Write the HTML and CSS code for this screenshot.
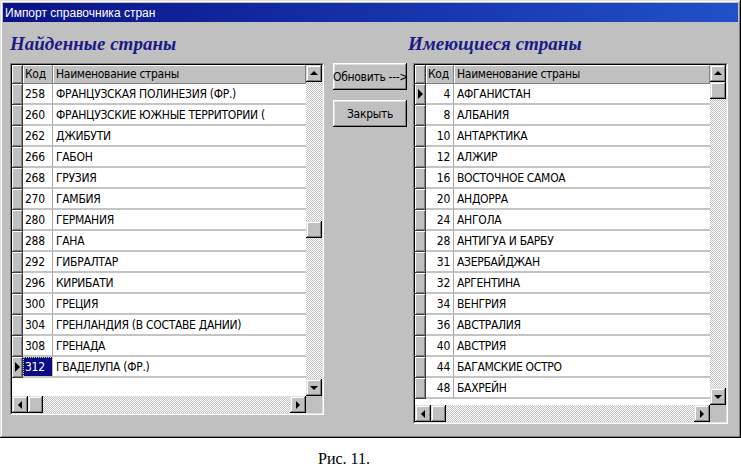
FILE: index.html
```html
<!DOCTYPE html>
<html lang="ru">
<head>
<meta charset="utf-8">
<title>Импорт справочника стран</title>
<link rel="stylesheet" href="styles.css">
</head>
<body>
<div class="window">
  <div class="titlebar">Импорт справочника стран</div>
  <div class="content">
    <h2 class="heading heading-left">Найденные страны</h2>
    <h2 class="heading heading-right">Имеющиеся страны</h2>

    <div class="dbgrid grid-left">
      <div class="grid-inner">
        <div class="grid-main">
          <div class="table">
            <div class="row head"><div class="ind"></div><div class="code">Код</div><div class="name">Наименование страны</div></div>
            <div class="row"><div class="ind"></div><div class="code">258</div><div class="name">ФРАНЦУЗСКАЯ ПОЛИНЕЗИЯ (ФР.)</div></div>
            <div class="row"><div class="ind"></div><div class="code">260</div><div class="name">ФРАНЦУЗСКИЕ ЮЖНЫЕ ТЕРРИТОРИИ (</div></div>
            <div class="row"><div class="ind"></div><div class="code">262</div><div class="name">ДЖИБУТИ</div></div>
            <div class="row"><div class="ind"></div><div class="code">266</div><div class="name">ГАБОН</div></div>
            <div class="row"><div class="ind"></div><div class="code">268</div><div class="name">ГРУЗИЯ</div></div>
            <div class="row"><div class="ind"></div><div class="code">270</div><div class="name">ГАМБИЯ</div></div>
            <div class="row"><div class="ind"></div><div class="code">280</div><div class="name">ГЕРМАНИЯ</div></div>
            <div class="row"><div class="ind"></div><div class="code">288</div><div class="name">ГАНА</div></div>
            <div class="row"><div class="ind"></div><div class="code">292</div><div class="name">ГИБРАЛТАР</div></div>
            <div class="row"><div class="ind"></div><div class="code">296</div><div class="name">КИРИБАТИ</div></div>
            <div class="row"><div class="ind"></div><div class="code">300</div><div class="name">ГРЕЦИЯ</div></div>
            <div class="row"><div class="ind"></div><div class="code">304</div><div class="name">ГРЕНЛАНДИЯ (В СОСТАВЕ ДАНИИ)</div></div>
            <div class="row"><div class="ind"></div><div class="code">308</div><div class="name">ГРЕНАДА</div></div>
            <div class="row current"><div class="ind"><span class="pointer"></span></div><div class="code selected">312</div><div class="name">ГВАДЕЛУПА (ФР.)</div></div>
          </div>
          <div class="vscroll">
            <div class="raised arrow up"></div>
            <div class="track"><div class="raised thumb thumb-left"></div></div>
            <div class="raised arrow down"></div>
          </div>
        </div>
        <div class="hscroll">
          <div class="raised arrow left"></div>
          <div class="raised hthumb"></div>
          <div class="track"></div>
          <div class="raised arrow right"></div>
          <div class="corner"></div>
        </div>
      </div>
    </div>

    <div class="buttons">
      <button class="btn">Обновить ---&gt;</button>
      <button class="btn">Закрыть</button>
    </div>

    <div class="dbgrid grid-right">
      <div class="grid-inner">
        <div class="grid-main">
          <div class="table">
            <div class="row head"><div class="ind"></div><div class="code">Код</div><div class="name">Наименование страны</div></div>
            <div class="row current"><div class="ind"><span class="pointer"></span></div><div class="code">4</div><div class="name">АФГАНИСТАН</div></div>
            <div class="row"><div class="ind"></div><div class="code">8</div><div class="name">АЛБАНИЯ</div></div>
            <div class="row"><div class="ind"></div><div class="code">10</div><div class="name">АНТАРКТИКА</div></div>
            <div class="row"><div class="ind"></div><div class="code">12</div><div class="name">АЛЖИР</div></div>
            <div class="row"><div class="ind"></div><div class="code">16</div><div class="name">ВОСТОЧНОЕ САМОА</div></div>
            <div class="row"><div class="ind"></div><div class="code">20</div><div class="name">АНДОРРА</div></div>
            <div class="row"><div class="ind"></div><div class="code">24</div><div class="name">АНГОЛА</div></div>
            <div class="row"><div class="ind"></div><div class="code">28</div><div class="name">АНТИГУА И БАРБУ</div></div>
            <div class="row"><div class="ind"></div><div class="code">31</div><div class="name">АЗЕРБАЙДЖАН</div></div>
            <div class="row"><div class="ind"></div><div class="code">32</div><div class="name">АРГЕНТИНА</div></div>
            <div class="row"><div class="ind"></div><div class="code">34</div><div class="name">ВЕНГРИЯ</div></div>
            <div class="row"><div class="ind"></div><div class="code">36</div><div class="name">АВСТРАЛИЯ</div></div>
            <div class="row"><div class="ind"></div><div class="code">40</div><div class="name">АВСТРИЯ</div></div>
            <div class="row"><div class="ind"></div><div class="code">44</div><div class="name">БАГАМСКИЕ ОСТРО</div></div>
            <div class="row"><div class="ind"></div><div class="code">48</div><div class="name">БАХРЕЙН</div></div>
          </div>
          <div class="vscroll">
            <div class="raised arrow up"></div>
            <div class="track"><div class="raised thumb"></div></div>
            <div class="raised arrow down"></div>
          </div>
        </div>
        <div class="hscroll">
          <div class="raised arrow left"></div>
          <div class="raised hthumb"></div>
          <div class="track"></div>
          <div class="raised arrow right"></div>
          <div class="corner"></div>
        </div>
      </div>
    </div>
  </div>
</div>
<p class="caption">Рис. 11.</p>
</body>
</html>
```

FILE: styles.css
```css
* { box-sizing: border-box; }

body {
  margin: 0;
  background: #fff;
  font-family: "Liberation Sans", Arial, sans-serif;
}

.window {
  width: 741px;
  height: 438px;
  padding: 3px;
  background: #c0c0c0;
  box-shadow: inset -1px -1px #000, inset 1px 1px #dfdfdf,
              inset -2px -2px #808080, inset 2px 2px #fff;
}

.titlebar {
  height: 19px;
  padding-left: 2px;
  background: linear-gradient(to right, #0a1288, #2150c8);
  color: #fff;
  font-size: 12px;
  line-height: 20px;
}

.content {
  display: grid;
  grid-template-columns: 323px 80px 315px;
  grid-template-rows: 31px auto;
  align-items: start;
  padding: 10px 0 0 7px;
}

.heading {
  margin: 0;
  font: italic bold 19px/24px "Liberation Serif", "Times New Roman", serif;
  color: #1a1a88;
  white-space: nowrap;
}
.heading-left { grid-row: 1; grid-column: 1; }
.heading-right { grid-row: 1; grid-column: 3; margin-left: -5px; }

/* ---------- DB grid ---------- */
.dbgrid {
  grid-row: 2;
  border: 1px solid;
  border-color: #808080 #fff #fff #808080;
  font-family: "DejaVu Sans Condensed", "Liberation Sans Narrow", "Liberation Sans", sans-serif;
  font-size: 12px;
  letter-spacing: -0.3px;
  color: #000;
}
.grid-left { grid-column: 1; width: 314px; height: 352px; }
.grid-right { grid-column: 3; width: 315px; height: 361px; }

.grid-inner {
  height: 100%;
  border: 1px solid;
  border-color: #000 #dfdfdf #dfdfdf #000;
  display: flex;
  flex-direction: column;
}

.grid-main {
  flex: 1;
  display: flex;
  min-height: 0;
}

.table {
  flex: 1;
  overflow: hidden;
  background: #fff;
}

.row {
  display: flex;
  height: 21px;
  line-height: 21px;
  white-space: nowrap;
}
.row > div { height: 21px; }

.ind {
  width: 11px;
  flex: none;
  background: #c0c0c0;
  border-right: 1px solid #404040;
  border-bottom: 1px solid #404040;
  box-shadow: inset 1px 1px #fff, inset -1px -1px #808080;
  display: flex;
  align-items: center;
  justify-content: center;
}

.code, .name {
  border-bottom: 2px solid #c4c4c4;
  overflow: hidden;
}
.code {
  flex: none;
  border-right: 1px solid #a8a8a8;
  padding: 0 2px;
}
.name {
  flex: 1;
  padding: 0 3px;
}

.grid-left .code { width: 30px; }
.grid-right .code { width: 28px; text-align: right; padding-right: 3px; }

.row.head { height: 19px; line-height: 18px; }
.row.head > div { height: 19px; }
.head .code, .head .name {
  background: #c0c0c0;
  border-bottom: 1px solid #808080;
  border-right: 1px solid #808080;
  box-shadow: inset 1px 1px #fff;
}
.grid-right .head .code { text-align: left; padding-left: 2px; }

.selected {
  background: #0a0a84;
  color: #fff;
  outline: 1px dotted #d8d890;
  outline-offset: -1px;
}

.pointer {
  width: 0;
  height: 0;
  border-left: 5px solid #000;
  border-top: 5px solid transparent;
  border-bottom: 5px solid transparent;
  margin-left: 1px;
}

/* ---------- scrollbars ---------- */
.raised {
  background: #c0c0c0;
  box-shadow: inset -1px -1px #000, inset 1px 1px #dfdfdf,
              inset -2px -2px #808080, inset 2px 2px #fff;
}

.track {
  background-color: #c0c0c0;
  background-image: conic-gradient(#fff 25%, #c0c0c0 0 50%, #fff 0 75%, #c0c0c0 0);
  background-size: 2px 2px;
}

.vscroll {
  width: 16px;
  flex: none;
  display: flex;
  flex-direction: column;
}
.vscroll .track { flex: 1; }

.arrow {
  flex: none;
  display: flex;
  align-items: center;
  justify-content: center;
}
.vscroll .arrow { height: 17px; }
.hscroll .arrow { width: 16px; }

.arrow::before {
  content: "";
  width: 0;
  height: 0;
  border: 4px solid transparent;
}
.arrow.up::before { border-bottom-color: #000; border-top-width: 0; margin-top: -1px; }
.arrow.down::before { border-top-color: #000; border-bottom-width: 0; }
.arrow.left::before { border-right-color: #000; border-left-width: 0; margin-left: -1px; }
.arrow.right::before { border-left-color: #000; border-right-width: 0; }

.thumb { height: 17px; }
.thumb-left { margin-top: 139px; }

.hscroll {
  height: 17px;
  flex: none;
  display: flex;
}
.hscroll .track { flex: 1; }
.hthumb { width: 15px; flex: none; }
.corner { width: 16px; flex: none; background: #c0c0c0; }

/* ---------- buttons ---------- */
.buttons {
  grid-row: 2;
  grid-column: 2;
  display: flex;
  flex-direction: column;
  gap: 10px;
}

.btn {
  width: 74px;
  height: 27px;
  padding: 0;
  border: none;
  background: #c0c0c0;
  box-shadow: inset -1px -1px #000, inset 1px 1px #fff,
              inset -2px -2px #808080, inset 2px 2px #dfdfdf;
  font-family: "DejaVu Sans Condensed", "Liberation Sans Narrow", "Liberation Sans", sans-serif;
  font-size: 12px;
  letter-spacing: -0.3px;
  white-space: nowrap;
  color: #000;
}

/* ---------- caption ---------- */
.caption {
  margin: 0;
  padding: 11px 0 0 318px;
  font: 16px/20px "Liberation Serif", "Times New Roman", serif;
  color: #000;
}
```
